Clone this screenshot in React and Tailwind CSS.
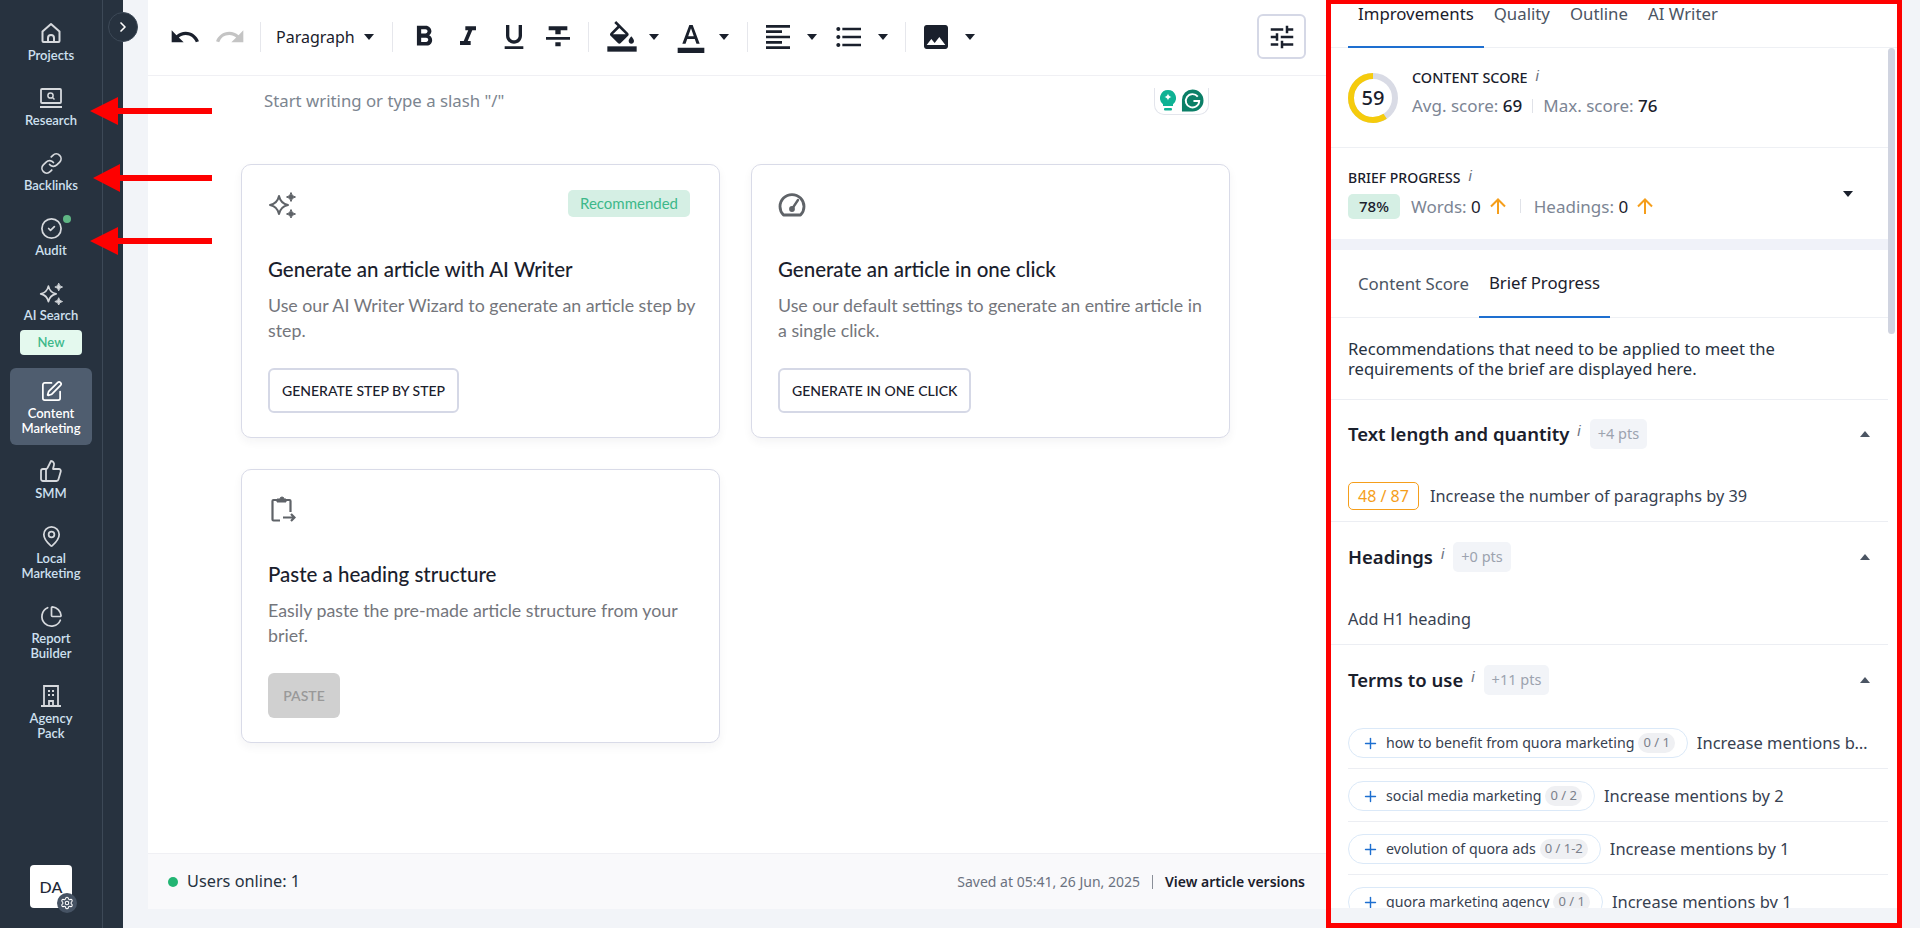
import React from 'react';
import { Link, CircleCheck, SquarePen, ThumbsUp, MapPin, ChartPie, Settings, ChevronRight, Plus } from 'lucide-react';
import {
    MdUndo, MdRedo, MdFormatBold, MdFormatItalic, MdFormatUnderlined, MdFormatStrikethrough,
    MdFormatColorText, MdFormatAlignLeft, MdFormatListBulleted, MdImage, MdTune,
} from 'react-icons/md';

const Sparkle = ({ className }) => (
    <svg viewBox="0 0 28 28" className={className} fill="none">
        <path d="M11 6Q12.6 13.4 20 15Q12.6 16.6 11 24Q9.4 16.6 2 15Q9.4 13.4 11 6Z" stroke="currentColor" strokeWidth="2" strokeLinejoin="round" />
        <path d="M23 2.5Q23.6 6.4 27.5 7Q23.6 7.6 23 11.5Q22.4 7.6 18.5 7Q22.4 6.4 23 2.5Z" fill="currentColor" stroke="currentColor" />
        <path d="M23 19.5Q23.6 23.4 27.5 24Q23.6 24.6 23 28Q22.4 24.6 18.5 24Q22.4 23.4 23 19.5Z" fill="currentColor" stroke="currentColor" />
    </svg>
);

const HomeIcon = () => (
    <svg viewBox="0 0 24 24" className="w-6 h-6" fill="none" stroke="currentColor" strokeWidth="2" strokeLinejoin="round">
        <path d="M3.5 10.5 12 3l8.5 7.5V20a1 1 0 0 1-1 1h-15a1 1 0 0 1-1-1z" />
        <path d="M9 21v-4a3 3 0 0 1 6 0v4" />
    </svg>
);

const LaptopIcon = () => (
    <svg viewBox="0 0 24 24" className="w-6 h-6" fill="none" stroke="currentColor" strokeWidth="1.8">
        <rect x="2" y="3" width="20" height="14" rx="1" />
        <path d="M1 21h22" strokeWidth="2" />
        <circle cx="11.5" cy="9.5" r="2.6" strokeWidth="1.5" />
        <path d="m13.5 11.5 2 2" strokeWidth="1.5" />
    </svg>
);

const BuildingIcon = () => (
    <svg viewBox="0 0 24 24" className="w-6 h-6" fill="none" stroke="currentColor" strokeWidth="1.8">
        <path d="M5 22V2h14v20M2 22h20" />
        <path d="M10 22v-5h4v5" />
        <path d="M9 7h2M13 7h2M9 11h2M13 11h2" strokeWidth="2" />
    </svg>
);

const Caret = ({ color = 'border-t-[#1a202c]' }) => (
    <span className="flex w-3 justify-center">
        <span className={`w-0 h-0 border-x-[5px] border-t-[6px] border-x-transparent ${color}`}></span>
    </span>
);

const CaretUp = () => (
    <span className="w-0 h-0 border-x-[5px] border-b-[6px] border-x-transparent border-b-[#4b5563]"></span>
);

const Divider = ({ className }) => <span className={`h-[30px] w-px bg-[#e6e7ec] ${className}`}></span>;

const Info = ({ className = '' }) => (
    <span className={`italic font-[family-name:"Liberation_Sans",sans-serif] text-[15px] leading-none text-[#6b7280] ${className}`}>i</span>
);

const NavItem = ({ icon, label, dot, active }) => (
    <div className={`relative flex flex-col items-center text-[13px] leading-[15px] font-semibold text-center ${active ? 'text-white' : 'text-[#cfe0f0]'}`}>
        <span className={`mb-[3px] flex h-6 items-center justify-center ${active ? 'text-white' : 'text-[#d6d9dd]'}`}>{icon}</span>
        {label.map((line) => <span key={line}>{line}</span>)}
        {dot && <span className="absolute top-[-1px] left-[62%] w-2 h-2 rounded-full bg-[#5fb684]"></span>}
    </div>
);

const Sidebar = () => (
    <aside className="relative w-[123px] shrink-0 bg-[#27323f] h-full">
        <div className="flex h-full w-[103px] flex-col border-r border-[#3d4957] pt-[21px] pb-5">
            <div className="flex flex-col gap-[23px]">
                <NavItem icon={<HomeIcon />} label={['Projects']} />
                <NavItem icon={<LaptopIcon />} label={['Research']} />
                <NavItem icon={<Link size={23} strokeWidth={1.8} />} label={['Backlinks']} />
                <NavItem icon={<CircleCheck size={23} strokeWidth={1.8} />} label={['Audit']} dot />
                <div className="flex flex-col items-center">
                    <NavItem icon={<Sparkle className="w-6 h-6" />} label={['AI Search']} />
                    <span className="mt-[7px] flex h-[25px] w-[62px] items-center justify-center rounded-[4px] bg-[#e4f9ee] text-[13px] font-semibold text-[#3db88a]">New</span>
                </div>
                <div className="mx-2.5 -mt-[10px] -mb-[9px] rounded-[6px] bg-[#4f5d6f] pt-[11px] pb-[9px]">
                    <NavItem icon={<SquarePen size={23} strokeWidth={1.8} />} label={['Content', 'Marketing']} active />
                </div>
                <NavItem icon={<ThumbsUp size={24} strokeWidth={1.8} />} label={['SMM']} />
                <NavItem icon={<MapPin size={23} strokeWidth={1.8} />} label={['Local', 'Marketing']} />
                <NavItem icon={<ChartPie size={23} strokeWidth={1.8} />} label={['Report', 'Builder']} />
                <NavItem icon={<BuildingIcon />} label={['Agency', 'Pack']} />
            </div>
            <div className="relative mt-auto ml-[30px] flex h-[43px] w-[42px] items-center justify-center rounded-[4px] bg-white text-[16px] font-medium text-[#1f2937]">
                DA
                <span className="absolute -right-[5px] -bottom-[5px] flex h-5 w-5 items-center justify-center rounded-full bg-[#465364] text-white">
                    <Settings size={14} strokeWidth={1.8} />
                </span>
            </div>
        </div>
        <button className="absolute top-3 left-[108px] flex h-[30px] w-[30px] items-center justify-center rounded-full border border-[#3d4957] bg-[#27323f] text-white">
            <ChevronRight size={16} strokeWidth={2.5} />
        </button>
    </aside>
);

const Toolbar = () => (
    <div className="flex h-[76px] shrink-0 items-center border-b border-[#f0f0f4] pb-0.5 pl-[21px] pr-[22px] text-[#1a202c] font-[family-name:'Noto_Sans',sans-serif]">
        <MdUndo size={32} />
        <MdRedo size={32} className="ml-[13px] text-[#c4c4c4]" />
        <Divider className="ml-[14px]" />
        <span className="ml-[15px] w-[81px] text-[16px]">Paragraph</span>
        <span className="ml-1.5"><Caret /></span>
        <Divider className="ml-[17px]" />
        <MdFormatBold size={34} className="mx-[-1px] ml-[14px]" />
        <MdFormatItalic size={32} className="ml-3" />
        <MdFormatUnderlined size={32} className="ml-3.5" />
        <MdFormatStrikethrough size={32} className="ml-3" />
        <Divider className="ml-3.5" />
        <svg viewBox="0 0 24 24" className="ml-[17px] w-8 h-8" fill="currentColor">
            <path d="M16.56 8.94L7.62 0 6.21 1.41l2.38 2.38-5.15 5.15c-.59.59-.59 1.54 0 2.12l5.5 5.5c.29.29.68.44 1.06.44s.77-.15 1.06-.44l5.5-5.5c.59-.58.59-1.53 0-2.12zM5.21 10L10 5.21 14.79 10H5.21zM19 11.5s-2 2.17-2 3.5c0 1.1.9 2 2 2s2-.9 2-2c0-1.33-2-3.5-2-3.5z" />
            <path d="M1 19h22v4H1z" />
        </svg>
        <span className="ml-2.5"><Caret /></span>
        <MdFormatColorText size={32} className="ml-[15px]" />
        <span className="ml-[11px]"><Caret /></span>
        <Divider className="ml-[17px]" />
        <MdFormatAlignLeft size={32} className="ml-3.5" />
        <span className="ml-3"><Caret /></span>
        <MdFormatListBulleted size={32} className="ml-[15px]" />
        <span className="ml-3"><Caret /></span>
        <Divider className="ml-4" />
        <MdImage size={32} className="ml-3.5" />
        <span className="ml-3"><Caret /></span>
        <button className="ml-auto flex h-[45px] w-[49px] items-center justify-center rounded-[6px] border-2 border-[#d5d8e6]">
            <MdTune size={30} />
        </button>
    </div>
);

const GrammarlyBadge = () => (
    <div className="absolute top-[-1px] left-[913px] flex h-[27px] w-[55px] items-center justify-center gap-[5px] rounded-b-[10px] border border-t-0 border-[#e3e5ec]">
        <svg viewBox="0 0 16 22" className="w-4 h-[22px]">
            <path d="M8 0a8 8 0 0 1 5 14.2V16H3v-1.8A8 8 0 0 1 8 0z" fill="#0fb294" />
            <path d="M8 3.5c.6 2.2 1.3 2.9 3.5 3.5C9.3 7.6 8.600 8.300 8 10.500 7.400 8.300 6.700 7.600 4.500 7 6.700 6.400 7.400 5.700 8 3.500z" fill="#fff" />
            <rect x="4" y="18" width="8" height="2.500" rx="1" fill="#0fb294" />
        </svg>
        <svg viewBox="0 0 24 26" className="w-[23px] h-[26px]">
            <path d="M12 1a11.500 11.500 0 0 1 0 23H1V12A11 11 0 0 1 12 1z" fill="#0b7f67" />
            <path d="M17.500 8.500A7 7 0 1 0 19 13h-6" fill="none" stroke="#fff" strokeWidth="2" />
        </svg>
    </div>
);

const Card = ({ icon, badge, title, desc, button, disabled }) => (
    <div className="flex h-[274px] flex-col rounded-[10px] border border-[#d9dbe8] bg-white pt-[25px] pl-[26px] pr-[15px] shadow-[0_4px_10px_rgba(30,40,60,0.05)]">
        <div className="flex h-7 items-start justify-between">
            <span className="h-7 w-7 text-[#5f6368]">{icon}</span>
            {badge && (
                <span className="mr-[14px] flex h-[27px] w-[122px] items-center justify-center rounded-[5px] bg-[#d5efe4] text-[15px] text-[#3db88a]">{badge}</span>
            )}
        </div>
        <h3 className="mt-[39px] text-[20.5px] leading-6 font-medium text-[#1a202c]">{title}</h3>
        <p className="mt-[12px] text-[17.8px] leading-[25px] text-[#74767c]">{desc}</p>
        {disabled ? (
            <span className="mt-[25px] flex h-[45px] w-[72px] items-center justify-center rounded-[6px] bg-[#d0d0d0] text-[14px] font-semibold text-[#999999]">{button}</span>
        ) : (
            <button className="mt-[25px] flex h-[45px] w-fit items-center rounded-[6px] border-2 border-[#d5d8e6] px-3 text-[14px] font-medium text-[#1a202c]">{button}</button>
        )}
    </div>
);

const GaugeIcon = () => (
    <svg viewBox="0 0 28 28" className="w-7 h-7" fill="none" stroke="currentColor" strokeWidth="2.800">
        <path d="M5.500 25a12 12 0 1 1 17 0z" strokeLinejoin="round" />
        <path d="M14 19l6-9" strokeWidth="2.400" strokeLinecap="round" />
        <circle cx="14" cy="19" r="1.500" fill="currentColor" />
    </svg>
);

const ClipIcon = () => (
    <svg viewBox="0 0 28 28" className="w-7 h-7" fill="none" stroke="currentColor" strokeWidth="2.200">
        <path d="M9 5H5.500a1 1 0 0 0-1 1v18.500a1 1 0 0 0 1 1H12M18 5h3.500a1 1 0 0 1 1 1v11" />
        <path d="M9 7V4h3a2 2 0 0 1 4 0h2v3z" fill="currentColor" strokeWidth="1" />
        <path d="M15 22.500h12M23 19l3.500 3.500L23 26" />
    </svg>
);

const Editor = () => (
    <div className="flex h-[909px] w-[1180px] shrink-0 flex-col bg-white">
        <Toolbar />
        <div className="flex-1 pl-[93px]">
            <div className="relative mt-[13px] h-6 pl-[23px] text-[16.8px] leading-6 text-[#7c8590] font-[family-name:'Noto_Sans',sans-serif]">
                Start writing or type a slash "/"
                <GrammarlyBadge />
            </div>
            <div className="mt-[51px] grid w-[989px] grid-cols-2 gap-[31px]">
                <Card
                    icon={<Sparkle className="w-7 h-7" />}
                    badge="Recommended"
                    title="Generate an article with AI Writer"
                    desc="Use our AI Writer Wizard to generate an article step by step."
                    button="GENERATE STEP BY STEP"
                />
                <Card
                    icon={<GaugeIcon />}
                    title="Generate an article in one click"
                    desc="Use our default settings to generate an entire article in a single click."
                    button="GENERATE IN ONE CLICK"
                />
                <Card
                    icon={<ClipIcon />}
                    title="Paste a heading structure"
                    desc="Easily paste the pre-made article structure from your brief."
                    button="PASTE"
                    disabled
                />
            </div>
        </div>
        <div className="flex h-[56px] shrink-0 items-center justify-between border-t border-[#f0f0f4] bg-[#f9f9fb] pl-[20px] pr-[23px] font-[family-name:'Noto_Sans',sans-serif]">
            <div className="flex items-center text-[16.3px] text-[#27323f]">
                <span className="mr-[9px] h-2.5 w-2.5 rounded-full bg-[#22b573]"></span>
                Users online: 1
            </div>
            <div className="flex items-center text-[14px]">
                <span className="text-[#6b7280]">Saved at 05:41, 26 Jun, 2025</span>
                <span className="mx-3 h-3.5 w-px bg-[#8a8f98]"></span>
                <span className="font-semibold text-[#1a202c]">View article versions</span>
            </div>
        </div>
    </div>
);

const ScoreRing = () => (
    <div className="relative h-[50px] w-[50px] shrink-0">
        <svg viewBox="0 0 50 50" className="h-[50px] w-[50px]" fill="none" strokeWidth="6">
            <circle cx="25" cy="25" r="22" stroke="#d9dbe5" />
            <circle cx="25" cy="25" r="22" stroke="#f5cb0c" strokeDasharray="81.500 138.200" transform="translate(50 0) scale(-1 1) rotate(-90 25 25)" />
        </svg>
        <span className="absolute inset-0 flex items-center justify-center text-[20px] font-medium text-[#1a202c]">59</span>
    </div>
);

const UpArrow = () => (
    <svg viewBox="0 0 18 17" className="h-[17px] w-[18px]" fill="none" stroke="#f59e1b" strokeWidth="2">
        <path d="M9 16V2M2 8.500 9 1.500l7 7" />
    </svg>
);

const SectionHead = ({ title, pts }) => (
    <div className="-mr-0.5 flex h-[30px] items-center">
        <h4 className="text-[18.5px] font-semibold text-[#1a202c]">{title}</h4>
        <Info className="mb-2 ml-2" />
        <span className="ml-[9px] flex h-[30px] items-center rounded-[5px] bg-[#f2f4f8] px-2 text-[14.5px] text-[#9ca3af]">{pts}</span>
        <span className="ml-auto flex"><CaretUp /></span>
    </div>
);

const TermRow = ({ term, count, note, last }) => (
    <div className={`flex h-[53px] shrink-0 items-start pt-3 pr-[16px] ${last ? '' : 'border-b border-[#eceef3]'}`}>
        <span className="flex h-[30px] shrink-0 items-center rounded-full border border-[#dbe9f8] pl-[13px] pr-[12px] text-[14.2px] text-[#374151]">
            <Plus size={17} strokeWidth={2} className="mr-[7px] text-[#1e6fd0]" />
            {term}
            <span className="ml-[4px] flex h-5 items-center rounded-full bg-[#eff0f3] px-[5px] text-[13px] text-[#7b818c]">{count}</span>
        </span>
        <span className="ml-[9px] mt-[3px] min-w-0 truncate text-[16.5px] text-[#374151]">{note}</span>
    </div>
);

const Panel = () => (
    <div className="flex h-[908px] w-[572px] shrink-0 flex-col overflow-hidden bg-white text-[#1a202c] font-[family-name:'Noto_Sans',sans-serif]">
        <div className="flex h-[48px] shrink-0 border-b border-[#eef0f4] pl-5 text-[16.8px] leading-5 text-[#4b5563]">
            <span className="-mb-px h-[48px] border-b-2 border-[#1e6fd0] px-2.5 pt-[4px] text-[#1a202c]">Improvements</span>
            <span className="px-2.5 pt-[4px]">Quality</span>
            <span className="px-2.5 pt-[4px]">Outline</span>
            <span className="px-2.5 pt-[4px]">AI Writer</span>
        </div>
        <div className="flex min-h-0 flex-1">
            <div className="w-[560px] shrink-0">
                <div className="flex h-[100px] items-center border-b border-[#eef0f4] pl-5">
                    <ScoreRing />
                    <div className="mb-3 ml-[14px]">
                        <div className="flex text-[14.4px] leading-5 font-medium">CONTENT SCORE<Info className="ml-2" /></div>
                        <div className="mt-2 flex items-center text-[17px] leading-5 text-[#7c8594]">
                            <span>Avg. score: <span className="font-medium text-[#1a202c]">69</span></span>
                            <span className="mx-[10px] h-3.5 w-px bg-[#e0e2e8]"></span>
                            <span>Max. score: <span className="font-medium text-[#1a202c]">76</span></span>
                        </div>
                    </div>
                </div>
                <div className="flex h-[91px] items-center justify-between pl-5 pr-[34px]">
                    <div>
                        <div className="-mt-px flex text-[14px] leading-5 font-medium">BRIEF PROGRESS<Info className="ml-2" /></div>
                        <div className="mt-[6px] flex h-[25px] items-center text-[17px] text-[#7c8594]">
                            <span className="flex h-[25px] w-[52px] items-center justify-center rounded-[5px] bg-[#d5efe4] font-medium text-[#1a202c] text-[15px]">78%</span>
                            <span className="ml-[11px] pt-0.5">Words: <span className="text-[#1a202c]">0</span></span>
                            <span className="ml-2"><UpArrow /></span>
                            <span className="mx-[13px] h-3.5 w-px bg-[#e0e2e8]"></span>
                            <span className="pt-0.5">Headings: <span className="text-[#1a202c]">0</span></span>
                            <span className="ml-2"><UpArrow /></span>
                        </div>
                    </div>
                    <Caret />
                </div>
                <div className="h-[11px] bg-[#f0f2f9]"></div>
                <div className="flex h-[68px] border-b border-[#eef0f4] pl-5 text-[16.8px] text-[#4b5563]">
                    <span className="flex items-center px-2.5">Content Score</span>
                    <span className="-mb-px flex h-[68px] items-center border-b-2 border-[#1e6fd0] px-2.5 text-[#1a202c]">Brief Progress</span>
                </div>
                <p className="w-[480px] pt-[21px] pb-5 pl-5 text-[16.6px] leading-5 text-[#27323f]">
                    Recommendations that need to be applied to meet the requirements of the brief are displayed here.
                </p>
                <div className="h-[122px] border-t border-[#eceef3] px-5 pt-[19px]">
                    <SectionHead title="Text length and quantity" pts="+4 pts" />
                    <div className="mt-[33px] flex items-center">
                        <span className="flex h-[28px] w-[71px] items-center justify-center rounded-[5px] border border-[#f59e1b] text-[16px] text-[#f59e1b]">48 / 87</span>
                        <span className="ml-[11px] text-[16.3px] text-[#374151]">Increase the number of paragraphs by 39</span>
                    </div>
                </div>
                <div className="h-[123px] border-t border-[#eceef3] px-5 pt-[20px]">
                    <SectionHead title="Headings" pts="+0 pts" />
                    <div className="mt-[35px] text-[16.3px] leading-6 text-[#374151]">Add H1 heading</div>
                </div>
                <div className="border-t border-[#eceef3] pt-[20px]">
                    <div className="px-5"><SectionHead title="Terms to use" pts="+11 pts" /></div>
                    <div className="mt-[21px] flex flex-col pl-5">
                        <TermRow term="how to benefit from quora marketing" count="0 / 1" note="Increase mentions by 1" />
                        <TermRow term="social media marketing" count="0 / 2" note="Increase mentions by 2" />
                        <TermRow term="evolution of quora ads" count="0 / 1-2" note="Increase mentions by 1" />
                        <TermRow term="quora marketing agency" count="0 / 1" note="Increase mentions by 1" last />
                    </div>
                </div>
            </div>
            <div className="w-3 shrink-0">
                <div className="h-[286px] w-[7px] rounded-full bg-[#d0d4e0]"></div>
            </div>
        </div>
    </div>
);

const Arrow = ({ top, tip, base }) => (
    <svg className="pointer-events-none absolute left-0 h-[30px] w-[220px]" style={{ top }} viewBox="0 0 220 30">
        <path d={`M${tip} 15 L${base} 1 V12 H212 V18 H${base} V29 Z`} fill="#fe0000" />
    </svg>
);

export default function App() {
    return (
        <div className="relative flex h-[928px] w-full overflow-hidden bg-[#f2f4f8] font-[family-name:Lato,sans-serif]">
            <Sidebar />
            <div className="w-[25px] shrink-0"></div>
            <Editor />
            <Panel />
            <Arrow top={96} tip={90} base={118} />
            <Arrow top={163} tip={93} base={120} />
            <Arrow top={226} tip={90} base={118} />
            <div className="pointer-events-none absolute top-0 left-[1326px] h-[928px] w-[576px] border-[5px] border-t-4 border-[#fe0000]"></div>
        </div>
    );
}
